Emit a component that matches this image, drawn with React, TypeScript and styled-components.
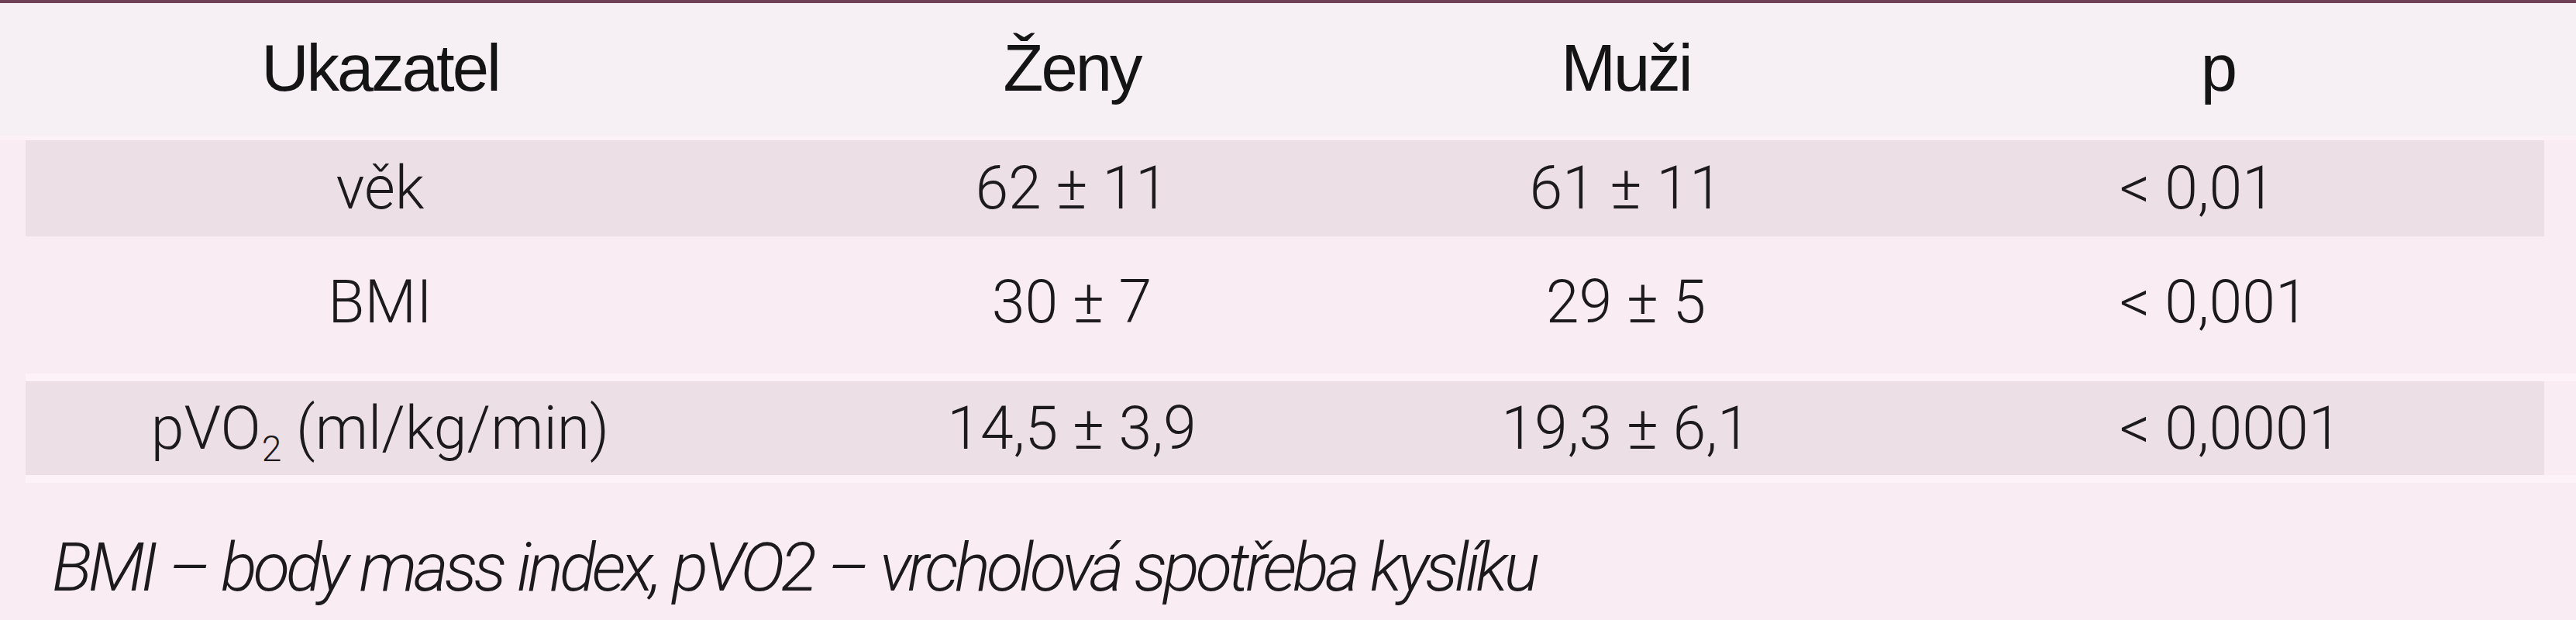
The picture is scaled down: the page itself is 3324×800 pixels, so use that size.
import styled, { createGlobalStyle } from 'styled-components';

const GlobalStyle = createGlobalStyle`
  html, body {
    margin: 0;
    padding: 0;
    background: #f9edf3;
  }
  #root {
    width: 3324px;
    height: 800px;
    overflow: hidden;
  }
`;

const Page = styled.div`
  width: 3324px;
  height: 800px;
  box-sizing: border-box;
  background: #f9edf3;
  border-top: 4px solid #6e4159;
  display: flex;
  flex-direction: column;
`;

const Row = styled.div<{ $height: number; $shaded?: boolean; $head?: boolean; $shift?: number }>`
  display: grid;
  grid-template-columns: 915px 870px 560px 905px;
  height: ${(p) => p.$height}px;
  box-sizing: border-box;
  padding: 0 41px ${(p) => p.$shift || 0}px 33px;
  background: ${(p) => (p.$head ? '#f6eff3' : p.$shaded ? '#ecdfe5' : 'transparent')};
  background-clip: ${(p) => (p.$head ? 'border-box' : 'content-box')};
  box-shadow: ${(p) => (p.$head ? 'inset 0 -6px 0 #fcf1f6' : 'none')};
`;

const Cell = styled.div<{ $left?: number; $start?: boolean }>`
  display: flex;
  align-items: center;
  justify-content: ${(p) => (p.$start ? 'flex-start' : 'center')};
  padding-left: ${(p) => p.$left || 0}px;
  white-space: nowrap;
`;

const HeadText = styled.span`
  font-family: 'Liberation Sans', Arial, sans-serif;
  font-size: 85px;
  font-weight: 400;
  letter-spacing: -3px;
  color: #141414;
`;

const DataText = styled.span`
  font-family: Roboto, 'Liberation Sans', sans-serif;
  font-size: 77px;
  font-weight: 300;
  color: #1c1a1c;
`;

const Sub = styled.sub`
  font-size: 0.6em;
  vertical-align: -0.36em;
  line-height: 0;
  margin: 0 0 0 1px;
`;

const Rule = styled.div`
  height: 10px;
  margin: 0 0 0 33px;
  background: #fcf2f7;
`;

const Footnote = styled.div`
  padding: 58px 0 0 67px;
  font-family: Roboto, 'Liberation Sans', sans-serif;
  font-size: 87px;
  font-style: italic;
  font-weight: 300;
  letter-spacing: -5.1px;
  word-spacing: 2px;
  color: #1c1a1c;
  white-space: nowrap;
`;

type Line = {
  label: React.ReactNode;
  women: string;
  men: string;
  p: string;
  height: number;
  shaded?: boolean;
  shift?: number;
};

const lines: Line[] = [
  { label: 'věk', women: '62 ± 11', men: '61 ± 11', p: '< 0,01', height: 124, shaded: true },
  { label: 'BMI', women: '30 ± 7', men: '29 ± 5', p: '< 0,001', height: 177, shift: 8 },
  {
    label: (
      <>
        pVO<Sub>2</Sub> (ml/kg/min)
      </>
    ),
    women: '14,5 ± 3,9',
    men: '19,3 ± 6,1',
    p: '< 0,0001',
    height: 121,
    shaded: true,
  },
];

export default function App() {
  return (
    <>
      <GlobalStyle />
      <Page>
        <Row $height={177} $head $shift={10}>
          <Cell>
            <HeadText>Ukazatel</HeadText>
          </Cell>
          <Cell>
            <HeadText>Ženy</HeadText>
          </Cell>
          <Cell>
            <HeadText>Muži</HeadText>
          </Cell>
          <Cell $left={63}>
            <HeadText>p</HeadText>
          </Cell>
        </Row>
        {lines.map((l, i) => (
          <div key={i}>
            {i === 2 && <Rule />}
            <Row $height={l.height} $shaded={l.shaded} $shift={l.shift}>
              <Cell>
                <DataText>{l.label}</DataText>
              </Cell>
              <Cell>
                <DataText>{l.women}</DataText>
              </Cell>
              <Cell>
                <DataText>{l.men}</DataText>
              </Cell>
              <Cell $start $left={357}>
                <DataText>{l.p}</DataText>
              </Cell>
            </Row>
          </div>
        ))}
        <Rule />
        <Footnote>BMI – body mass index, pVO2 – vrcholová spotřeba kyslíku</Footnote>
      </Page>
    </>
  );
}
